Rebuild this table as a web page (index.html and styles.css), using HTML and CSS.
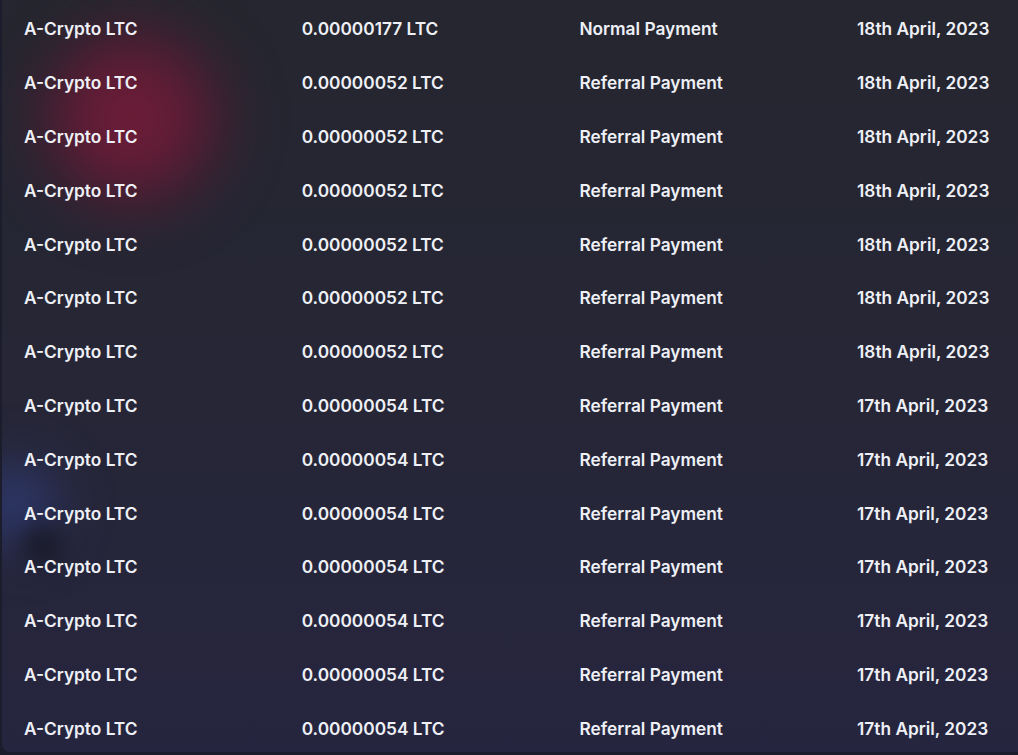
FILE: index.html
```html
<!DOCTYPE html>
<html lang="en">
<head>
<meta charset="utf-8">
<title>Payments</title>
<link rel="stylesheet" href="styles.css">
</head>
<body>
<div class="panel">
  <div class="glow glow-red"></div>
  <div class="glow glow-blue"></div>
  <div class="glow glow-dark"></div>
  <div class="rows">
    <div class="row"><span>A-Crypto LTC</span><span>0.00000177 LTC</span><span>Normal Payment</span><span>18th April, 2023</span></div>
    <div class="row"><span>A-Crypto LTC</span><span>0.00000052 LTC</span><span>Referral Payment</span><span>18th April, 2023</span></div>
    <div class="row"><span>A-Crypto LTC</span><span>0.00000052 LTC</span><span>Referral Payment</span><span>18th April, 2023</span></div>
    <div class="row"><span>A-Crypto LTC</span><span>0.00000052 LTC</span><span>Referral Payment</span><span>18th April, 2023</span></div>
    <div class="row"><span>A-Crypto LTC</span><span>0.00000052 LTC</span><span>Referral Payment</span><span>18th April, 2023</span></div>
    <div class="row"><span>A-Crypto LTC</span><span>0.00000052 LTC</span><span>Referral Payment</span><span>18th April, 2023</span></div>
    <div class="row"><span>A-Crypto LTC</span><span>0.00000052 LTC</span><span>Referral Payment</span><span>18th April, 2023</span></div>
    <div class="row"><span>A-Crypto LTC</span><span>0.00000054 LTC</span><span>Referral Payment</span><span>17th April, 2023</span></div>
    <div class="row"><span>A-Crypto LTC</span><span>0.00000054 LTC</span><span>Referral Payment</span><span>17th April, 2023</span></div>
    <div class="row"><span>A-Crypto LTC</span><span>0.00000054 LTC</span><span>Referral Payment</span><span>17th April, 2023</span></div>
    <div class="row"><span>A-Crypto LTC</span><span>0.00000054 LTC</span><span>Referral Payment</span><span>17th April, 2023</span></div>
    <div class="row"><span>A-Crypto LTC</span><span>0.00000054 LTC</span><span>Referral Payment</span><span>17th April, 2023</span></div>
    <div class="row"><span>A-Crypto LTC</span><span>0.00000054 LTC</span><span>Referral Payment</span><span>17th April, 2023</span></div>
    <div class="row"><span>A-Crypto LTC</span><span>0.00000054 LTC</span><span>Referral Payment</span><span>17th April, 2023</span></div>
  </div>
</div>
</body>
</html>
```
FILE: styles.css
```css
html, body {
  margin: 0;
  padding: 0;
  height: 100%;
  overflow: hidden;
  background: #1b1c2c;
}
body {
  font-family: Inter, "Liberation Sans", sans-serif;
}
.panel {
  position: relative;
  margin-left: 2px;
  width: 1040px;
  height: 752px;
  border-bottom-left-radius: 8px;
  overflow: hidden;
  background: linear-gradient(180deg, #25262f 0%, #262636 50%, #26253f 100%);
}
.glow {
  position: absolute;
  border-radius: 50%;
  pointer-events: none;
}
.glow-red {
  left: 15px;
  top: 5px;
  width: 230px;
  height: 225px;
  filter: blur(24px);
  background: radial-gradient(circle, rgba(122, 28, 58, 0.95) 0%, rgba(110, 26, 54, 0.78) 35%, rgba(90, 22, 46, 0.35) 58%, rgba(80, 20, 40, 0) 72%);
}
.glow-blue {
  left: -45px;
  top: 450px;
  width: 115px;
  height: 110px;
  filter: blur(24px);
  background: radial-gradient(circle, rgba(52, 68, 135, 0.95) 0%, rgba(45, 58, 115, 0.5) 45%, rgba(40, 50, 100, 0) 75%);
}
.glow-dark {
  left: 10px;
  top: 515px;
  width: 60px;
  height: 60px;
  filter: blur(10px);
  background: radial-gradient(circle, rgba(18, 18, 24, 0.9) 0%, rgba(18, 18, 24, 0) 70%);
}
.rows {
  position: relative;
  padding-top: 2px;
}
.row {
  display: grid;
  grid-template-columns: 277.7px 277.7px 277.7px 1fr;
  align-items: center;
  height: 53.8px;
  padding-left: 22px;
  color: #eef0f6;
  font-size: 17.3px;
  font-weight: 600;
  white-space: nowrap;
}
```
